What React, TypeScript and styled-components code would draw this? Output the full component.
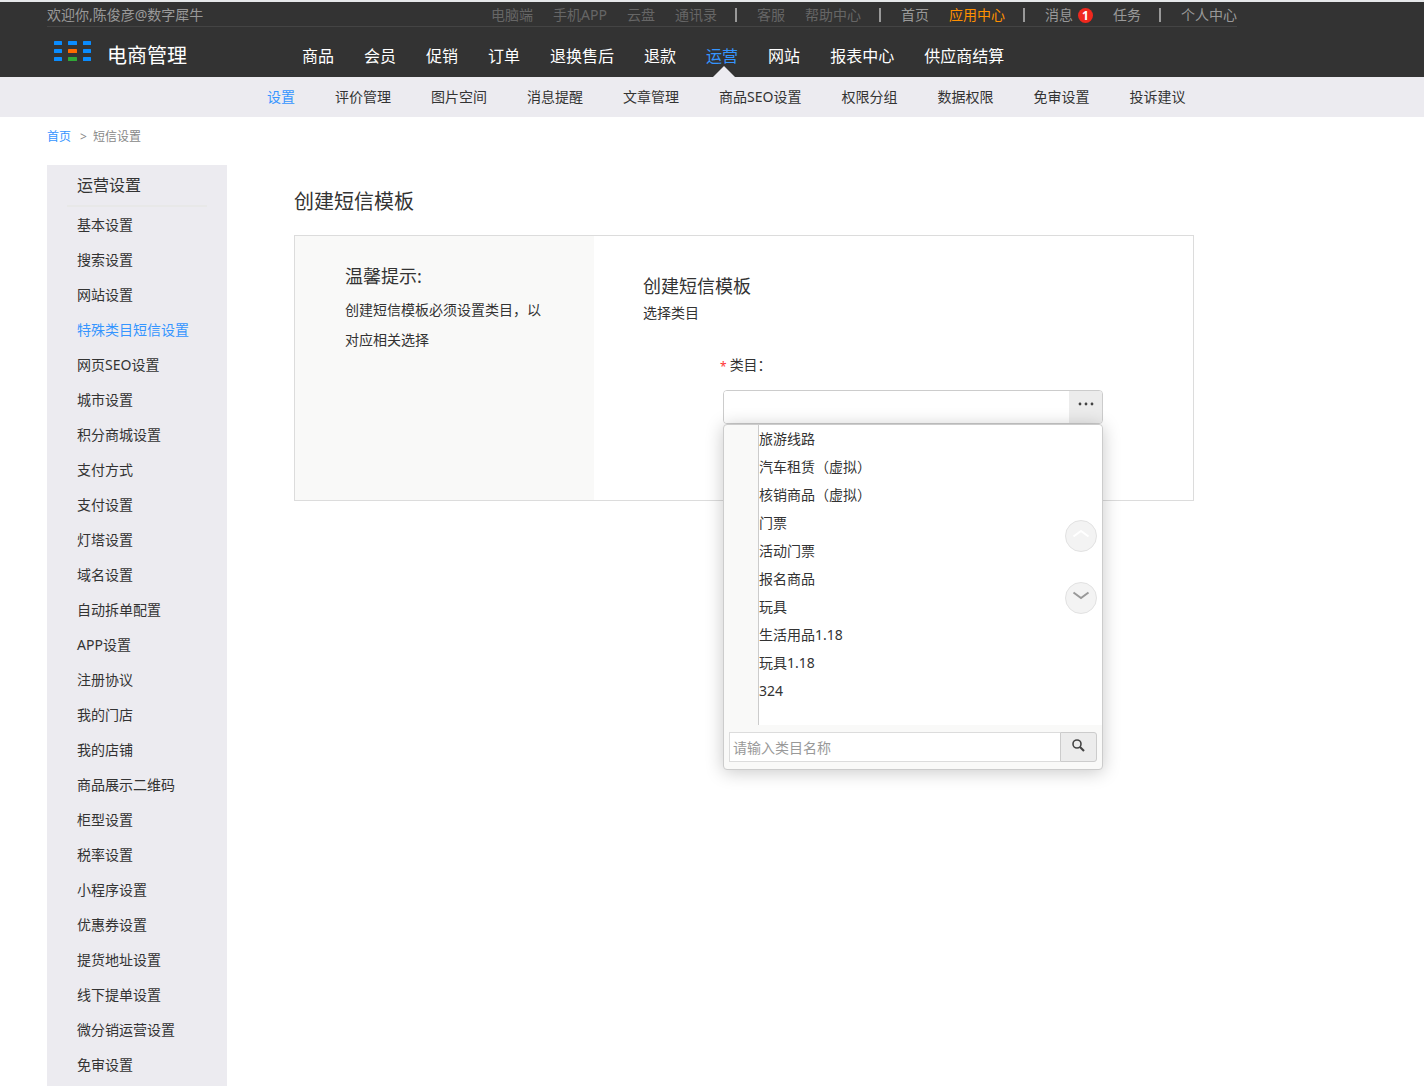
import React, { useState } from 'react';
import styled, { createGlobalStyle, css } from 'styled-components';

const GlobalStyle = createGlobalStyle`
  *, *::before, *::after { box-sizing: border-box; }
  body {
    margin: 0;
    background: #fff;
    color: #333;
    font-family: "Noto Sans", "Noto Sans CJK SC", sans-serif;
    font-size: 14px;
    line-height: 20px;
  }
  h1, h2, h3, p, ul { margin: 0; padding: 0; font-weight: 400; }
  ul { list-style: none; }
  a { color: inherit; text-decoration: none; }
  button, input { font: inherit; color: inherit; }
`;

const Page = styled.div`
  display: flex;
  flex-direction: column;
  min-height: 100vh;
`;

const Container = styled.div`
  width: 100%;
  max-width: 1237px;
  padding-left: 47px;
`;

const Header = styled.header`
  background: #333;
  border-top: 2px solid #e6e8ea;
`;

const TopBar = styled.div`
  display: flex;
  justify-content: space-between;
  align-items: flex-start;
  height: 25px;
  padding-top: 3px;
  border-bottom: 1px solid #444;
  color: #999;
  white-space: nowrap;
`;

const TopLinks = styled.nav`
  display: flex;
`;

const LinkGroup = styled.div`
  display: flex;
  align-items: center;
  gap: 20px;

  & + &::before {
    content: '';
    width: 2px;
    height: 14px;
    margin-left: 18px;
    background: #999;
  }
`;

const tones = { dim: '#666', normal: '#999', hot: '#ff9000' };

const TopLink = styled.a<{ $tone: keyof typeof tones }>`
  display: flex;
  align-items: center;
  gap: 5px;
  color: ${({ $tone }) => tones[$tone]};
`;

const Badge = styled.span`
  width: 15px;
  height: 15px;
  border-radius: 50%;
  background: #f0281e;
  color: #fff;
  font-size: 12px;
  font-weight: 700;
  line-height: 15px;
  text-align: center;
`;

const MainBar = styled.div`
  display: flex;
  height: 50px;
`;

const Brand = styled.a`
  display: flex;
  flex: 0 0 255px;
  gap: 15px;
  padding: 14px 0 0 7px;
  color: #fff;
  font-size: 20px;
  line-height: 30px;
`;

const MainNav = styled.nav`
  display: flex;
  gap: 30px;
  white-space: nowrap;
`;

const MainLink = styled.a<{ $active?: boolean }>`
  position: relative;
  padding-top: 17px;
  color: #fff;
  font-size: 16px;
  line-height: 24px;

  ${({ $active }) =>
    $active &&
    css`
      color: #3595ff;

      &::after {
        content: '';
        position: absolute;
        bottom: 0;
        left: 50%;
        margin-left: -9px;
        border: 11px solid transparent;
        border-top: 0;
        border-bottom-color: #ecebf0;
      }
    `}
`;

const SubBar = styled.div`
  background: #ecebf0;
`;

const SubNav = styled.nav`
  display: flex;
  gap: 40px;
  padding-left: 220px;
  line-height: 40px;
  white-space: nowrap;
`;

const SubLink = styled.a<{ $active?: boolean }>`
  color: ${({ $active }) => ($active ? '#3595ff' : '#333')};
`;

const Breadcrumb = styled.nav`
  display: flex;
  gap: 6px;
  padding: 10px 0 18px;
  color: #888;
  font-size: 12px;
`;

const CrumbLink = styled.a`
  margin-right: 3px;
  color: #3595ff;
`;

const Body = styled(Container)`
  display: flex;
  flex: 1;
  gap: 67px;
`;

const Sidebar = styled.aside`
  flex: 0 0 180px;
  padding: 0 20px;
  background: #ecebf0;
`;

const SideTitle = styled.h2`
  padding: 0 10px;
  border-bottom: 2px solid #e8e8e8;
  font-size: 16px;
  line-height: 40px;
`;

const SideLink = styled.a<{ $active?: boolean }>`
  display: block;
  padding: 0 10px;
  color: ${({ $active }) => ($active ? '#3595ff' : '#333')};
  line-height: 35px;
  white-space: nowrap;
`;

const Content = styled.main`
  flex: 0 1 900px;
  padding-top: 20px;
`;

const PageTitle = styled.h1`
  font-size: 20px;
  line-height: 34px;
`;

const Card = styled.section`
  display: flex;
  min-height: 266px;
  margin-top: 16px;
  border: 1px solid #dcdcdc;
`;

const Tips = styled.div`
  flex: 0 0 299px;
  padding: 25px 49px 0 50px;
  background: #f9f9f8;
  line-height: 30px;
`;

const BlockTitle = styled.h2`
  font-size: 18px;
  line-height: 30px;
`;

const TipText = styled.p`
  padding-top: 4px;
`;

const FormPanel = styled.form`
  flex: 1;
  padding: 35px 49px 0;
`;

const Hint = styled.p`
  line-height: 24px;
`;

const Field = styled.div`
  width: 380px;
  margin: 28px 0 0 80px;
`;

const FieldLabel = styled.label`
  display: flex;
  gap: 3px;
  align-items: center;
  height: 24px;
  margin: 0 0 13px -3px;
`;

const Required = styled.span`
  padding-top: 3px;
  color: #ff3333;
  font-size: 12px;
`;

const Picker = styled.div`
  position: relative;
`;

const PickerBox = styled.div`
  display: flex;
  height: 34px;
  border: 1px solid #ccc;
  border-radius: 4px;
  overflow: hidden;
`;

const PickerInput = styled.input`
  flex: 1;
  min-width: 0;
  padding: 0 12px;
  border: 0;
  background: #fff;
  outline: none;
`;

const PickerToggle = styled.button`
  display: flex;
  justify-content: center;
  width: 33px;
  padding: 11px 0 0;
  border: 0;
  background: #ececec;
`;

const Dropdown = styled.div`
  position: absolute;
  top: 100%;
  left: 0;
  width: 100%;
  border: 1px solid #ccc;
  border-radius: 4px;
  background: #f9f9f8;
  box-shadow: 0 2px 18px rgba(0, 0, 0, 0.22);
`;

const OptionList = styled.ul`
  height: 300px;
  margin-left: 34px;
  border-left: 1px solid #ccc;
  border-top-right-radius: 4px;
  background: #fff;
`;

const Option = styled.button`
  display: block;
  width: 100%;
  padding: 0;
  border: 0;
  background: none;
  line-height: 28px;
  text-align: left;
`;

const Scrollers = styled.div`
  position: absolute;
  top: 95px;
  right: 5px;
  display: grid;
  gap: 30px;
`;

const Scroller = styled.button`
  display: flex;
  justify-content: center;
  width: 32px;
  height: 32px;
  padding: 7px 0 0;
  border: 1px solid #e2e2e2;
  border-radius: 50%;
  background: #f3f3f3;
`;

const SearchRow = styled.div`
  display: flex;
  padding: 7px 5px;
`;

const SearchInput = styled.input`
  flex: 1;
  min-width: 0;
  height: 30px;
  padding: 0 3px;
  border: 1px solid #dcdcdc;
  border-right: 0;
  background: #fff;
  outline: none;

  &::placeholder { color: #999; opacity: 1; }
`;

const SearchButton = styled.button`
  display: flex;
  justify-content: center;
  width: 37px;
  padding: 6px 0 0;
  border: 1px solid #ccc;
  border-radius: 0 3px 3px 0;
  background: #ececec;
`;

type TopItem = { text: string; tone: keyof typeof tones; count?: number };

const topGroups: TopItem[][] = [
  [
    { text: '电脑端', tone: 'dim' },
    { text: '手机APP', tone: 'dim' },
    { text: '云盘', tone: 'dim' },
    { text: '通讯录', tone: 'dim' },
  ],
  [
    { text: '客服', tone: 'dim' },
    { text: '帮助中心', tone: 'dim' },
  ],
  [
    { text: '首页', tone: 'normal' },
    { text: '应用中心', tone: 'hot' },
  ],
  [
    { text: '消息', tone: 'normal', count: 1 },
    { text: '任务', tone: 'normal' },
  ],
  [{ text: '个人中心', tone: 'normal' }],
];

const mainItems = ['商品', '会员', '促销', '订单', '退换售后', '退款', '运营', '网站', '报表中心', '供应商结算'];

const subItems = [
  '设置', '评价管理', '图片空间', '消息提醒', '文章管理',
  '商品SEO设置', '权限分组', '数据权限', '免审设置', '投诉建议',
];

const sideItems = [
  '基本设置', '搜索设置', '网站设置', '特殊类目短信设置', '网页SEO设置',
  '城市设置', '积分商城设置', '支付方式', '支付设置', '灯塔设置',
  '域名设置', '自动拆单配置', 'APP设置', '注册协议', '我的门店',
  '我的店铺', '商品展示二维码', '柜型设置', '税率设置', '小程序设置',
  '优惠券设置', '提货地址设置', '线下提单设置', '微分销运营设置', '免审设置',
];

const categories = [
  '旅游线路', '汽车租赁（虚拟）', '核销商品（虚拟）', '门票', '活动门票',
  '报名商品', '玩具', '生活用品1.18', '玩具1.18', '324',
];

function LogoMark() {
  const colors = [
    ['#0a8cff', '#0a8cff', '#0a8cff'],
    ['#0a8cff', '#ff6a00', '#0a8cff'],
    ['#0a8cff', '#2fa836', '#0a8cff'],
  ];
  const columns = [0, 14, 29];
  return (
    <svg width="38" height="20" viewBox="0 0 38 20" aria-hidden="true">
      {colors.map((row, y) =>
        row.map((fill, x) => (
          <rect key={`${x}-${y}`} x={columns[x]} y={y * 8} width={x === 1 ? 9 : 8} height="4" rx="0.5" fill={fill} />
        )),
      )}
    </svg>
  );
}

function Chevron({ up, color }: { up?: boolean; color: string }) {
  return (
    <svg width="18" height="10" viewBox="0 0 18 10" aria-hidden="true">
      <path d={up ? 'M1.5 8.5 L9 3 L16.5 8.5' : 'M1.5 2.5 L9 8 L16.5 2.5'} fill="none" stroke={color} strokeWidth="2" />
    </svg>
  );
}

export default function App() {
  const [category, setCategory] = useState('');
  const [keyword, setKeyword] = useState('');

  return (
    <Page>
      <GlobalStyle />
      <Header>
        <Container>
          <TopBar>
            <span>欢迎你,陈俊彦@数字犀牛</span>
            <TopLinks>
              {topGroups.map((group, i) => (
                <LinkGroup key={i}>
                  {group.map((item) => (
                    <TopLink key={item.text} href="#" $tone={item.tone}>
                      {item.text}
                      {item.count && <Badge>{item.count}</Badge>}
                    </TopLink>
                  ))}
                </LinkGroup>
              ))}
            </TopLinks>
          </TopBar>
          <MainBar>
            <Brand href="#">
              <LogoMark />
              电商管理
            </Brand>
            <MainNav>
              {mainItems.map((item) => (
                <MainLink key={item} href="#" $active={item === '运营'}>
                  {item}
                </MainLink>
              ))}
            </MainNav>
          </MainBar>
        </Container>
      </Header>
      <SubBar>
        <Container>
          <SubNav>
            {subItems.map((item) => (
              <SubLink key={item} href="#" $active={item === '设置'}>
                {item}
              </SubLink>
            ))}
          </SubNav>
        </Container>
      </SubBar>
      <Container>
        <Breadcrumb>
          <CrumbLink href="#">首页</CrumbLink>
          <span>&gt;</span>
          <span>短信设置</span>
        </Breadcrumb>
      </Container>
      <Body>
        <Sidebar>
          <SideTitle>运营设置</SideTitle>
          <ul>
            {sideItems.map((item) => (
              <li key={item}>
                <SideLink href="#" $active={item === '特殊类目短信设置'}>
                  {item}
                </SideLink>
              </li>
            ))}
          </ul>
        </Sidebar>
        <Content>
          <PageTitle>创建短信模板</PageTitle>
          <Card>
            <Tips>
              <BlockTitle>温馨提示:</BlockTitle>
              <TipText>创建短信模板必须设置类目，以对应相关选择</TipText>
            </Tips>
            <FormPanel onSubmit={(e) => e.preventDefault()}>
              <BlockTitle>创建短信模板</BlockTitle>
              <Hint>选择类目</Hint>
              <Field>
                <FieldLabel htmlFor="category">
                  <Required>*</Required>
                  类目：
                </FieldLabel>
                <Picker>
                  <PickerBox>
                    <PickerInput id="category" value={category} onChange={(e) => setCategory(e.target.value)} />
                    <PickerToggle type="button" aria-label="展开类目">
                      <svg width="16" height="4" viewBox="0 0 16 4" fill="#444" aria-hidden="true">
                        <circle cx="2" cy="2" r="1.4" />
                        <circle cx="8" cy="2" r="1.4" />
                        <circle cx="14" cy="2" r="1.4" />
                      </svg>
                    </PickerToggle>
                  </PickerBox>
                  <Dropdown>
                    <OptionList>
                      {categories.map((name) => (
                        <li key={name}>
                          <Option type="button" onClick={() => setCategory(name)}>
                            {name}
                          </Option>
                        </li>
                      ))}
                    </OptionList>
                    <Scrollers>
                      <Scroller type="button" aria-label="上一页">
                        <Chevron up color="#fff" />
                      </Scroller>
                      <Scroller type="button" aria-label="下一页">
                        <Chevron color="#999" />
                      </Scroller>
                    </Scrollers>
                    <SearchRow>
                      <SearchInput
                        aria-label="类目名称"
                        placeholder="请输入类目名称"
                        value={keyword}
                        onChange={(e) => setKeyword(e.target.value)}
                      />
                      <SearchButton type="button" aria-label="搜索">
                        <svg width="13" height="13" viewBox="0 0 13 13" fill="none" stroke="#444" aria-hidden="true">
                          <circle cx="5" cy="5" r="4" strokeWidth="1.6" />
                          <path d="M8 8 L12 12" strokeWidth="2.2" />
                        </svg>
                      </SearchButton>
                    </SearchRow>
                  </Dropdown>
                </Picker>
              </Field>
            </FormPanel>
          </Card>
        </Content>
      </Body>
    </Page>
  );
}
